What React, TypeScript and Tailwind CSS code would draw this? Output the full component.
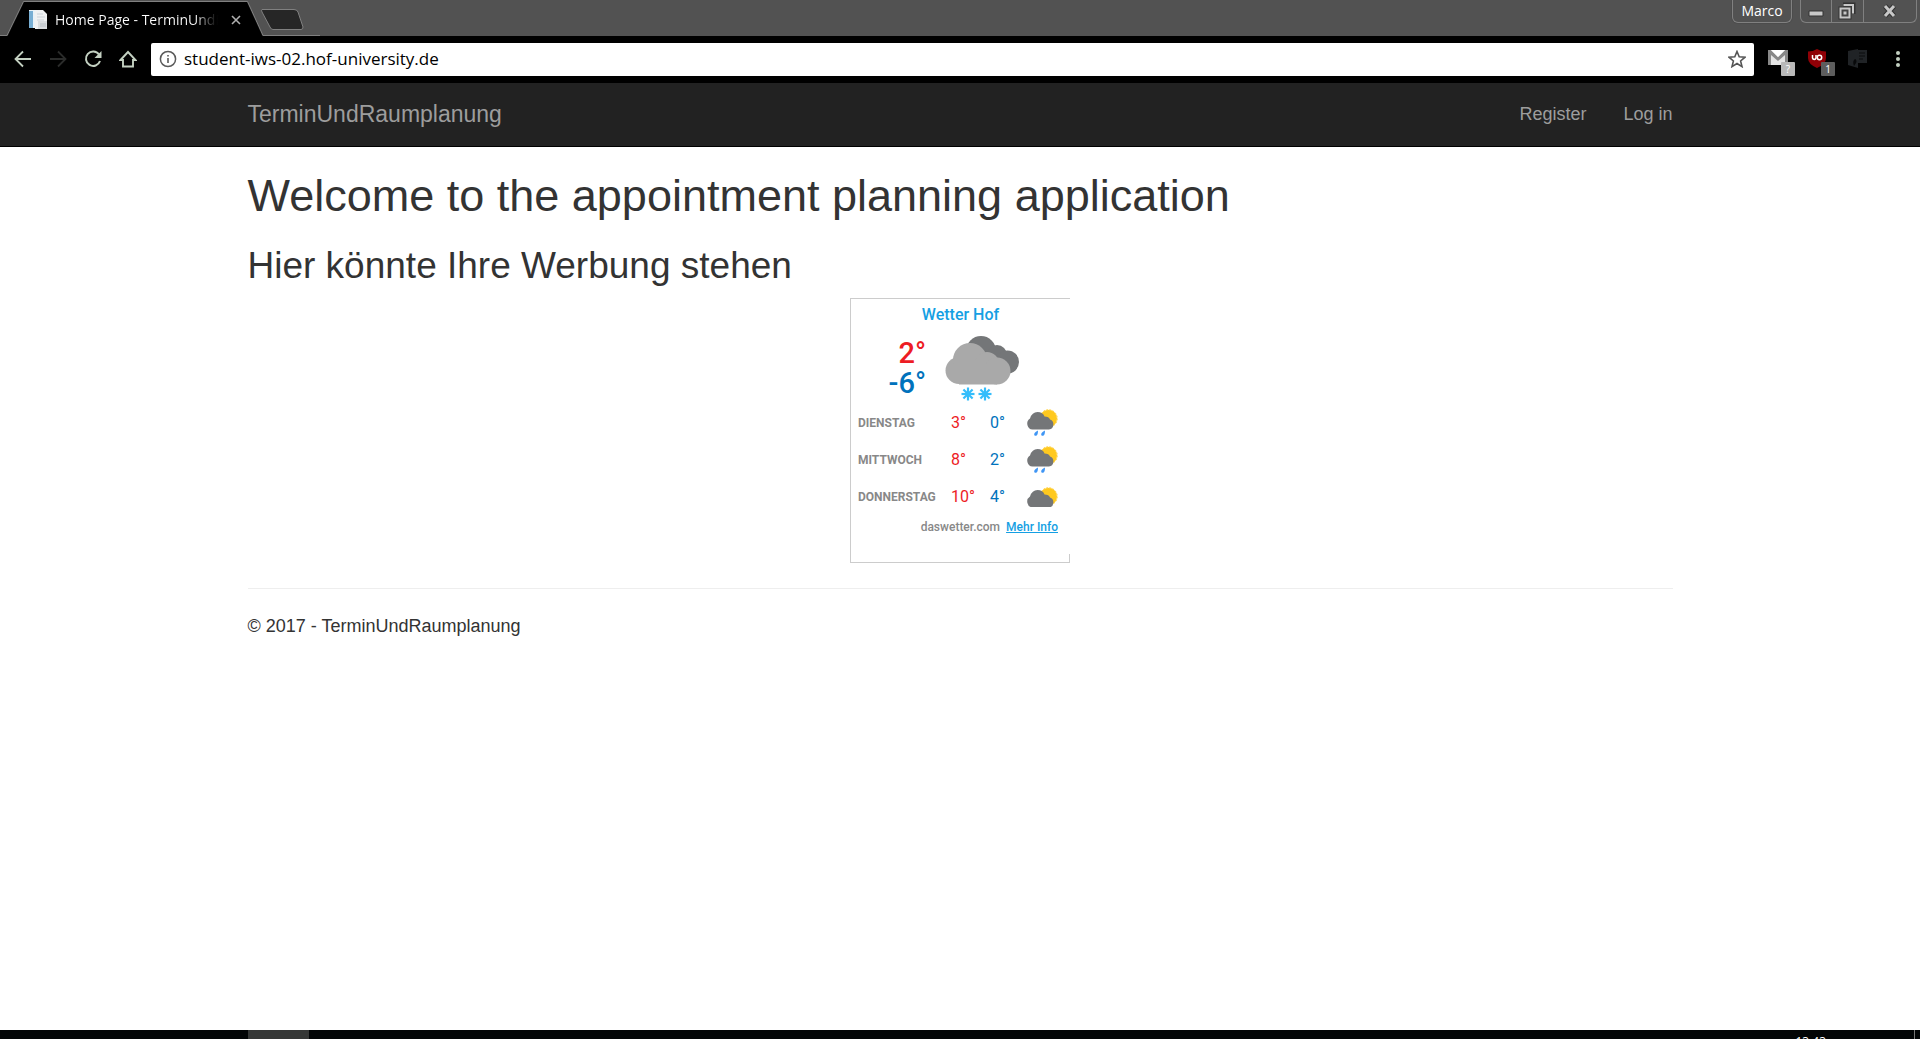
import React from "react";

const days = [
  { name: "DIENSTAG", max: "3°", min: "0°", rain: true },
  { name: "MITTWOCH", max: "8°", min: "2°", rain: true },
  { name: "DONNERSTAG", max: "10°", min: "4°", rain: false },
];

function TabStrip() {
  return (
    <header className="relative flex h-9 items-start justify-between bg-[#525252]">
      <svg className="absolute left-0 top-0 h-9 w-80" viewBox="0 0 320 36" aria-hidden="true">
        <path d="M0 35.5H7L23.500 1.500H247.500L263 35.500H320" fill="none" stroke="#808080" />
        <path d="M7.500 36L24 2H247L262.500 36Z" fill="#000" />
        <path d="M262 9.500H294Q297 9.500 298 12L303 27Q303 29.500 301 29.500H273Q271 29.500 270 27L262 12Q261 9.500 262 9.500Z" fill="#262626" stroke="#808080" />
      </svg>
      <div className="relative flex h-9 items-center pl-7 pt-1">
        <svg width="20" height="20" viewBox="0 0 20 20" aria-hidden="true">
          <path d="M1 0H14V18H1Z" fill="#e9f1f6" />
          <path d="M1 1H5V18H1Z" fill="#78aed3" />
          <path d="M7 0H15L19 4V19H7Z" fill="#f0f1f2" />
          <path d="M9 4H15M9 7H17M9 10H16" stroke="#cbd2d8" />
          <path d="M10 11H19V19H10Z" fill="#dadddf" />
          <path d="M12 14H18M12 16H18" stroke="#b8bec4" />
        </svg>
        <span className="ml-[7px] w-[165px] overflow-hidden whitespace-nowrap bg-linear-to-r from-white from-85% to-black bg-clip-text pb-px text-[14px] text-transparent">
          Home Page - TerminUndR
        </span>
        <button aria-label="Close tab" className="ml-[7px] p-1">
          <svg width="10" height="10" viewBox="0 0 10 10"><path d="M1 1L9 9M9 1L1 9" stroke="#b0b0b0" strokeWidth="1.600" /></svg>
        </button>
      </div>
      <div className="relative flex gap-2 pr-[3px] text-white">
        <button className="h-[23px] w-[60px] rounded-b-md border border-t-0 border-[#808080] text-[14px] leading-[22px] shadow-[0_0_1px_#222]">Marco</button>
        <div className="flex h-[23px] overflow-hidden rounded-b-md border border-t-0 border-[#808080]">
          <button aria-label="Minimize" className="w-[31px] border-r border-[#808080]">
            <svg width="30" height="22" viewBox="0 0 30 22"><path d="M8 11H22V16H8Z" fill="#c8c8c8" stroke="#333" /></svg>
          </button>
          <button aria-label="Restore" className="w-8 border-r border-[#808080]">
            <svg width="31" height="22" viewBox="0 0 31 22">
              <path d="M11 4.500H21.500V14" fill="none" stroke="#333" strokeWidth="4" />
              <path d="M11.500 5H21V13.500" fill="none" stroke="#c8c8c8" strokeWidth="2" />
              <path d="M8.500 8.500H17.500V17.500H8.500Z" fill="#444" stroke="#333" strokeWidth="4" />
              <path d="M8.500 8.500H17.500V17.500H8.500Z" fill="#444" stroke="#c8c8c8" strokeWidth="2" />
              <path d="M11.500 11.500H14.500V14.500H11.500Z" fill="#c8c8c8" />
            </svg>
          </button>
          <button aria-label="Close" className="w-[52px]">
            <svg width="52" height="22" viewBox="0 0 52 22">
              <path d="M21 6L30 16M30 6L21 16" stroke="#333" strokeWidth="5" />
              <path d="M21 6L30 16M30 6L21 16" stroke="#c8c8c8" strokeWidth="3" />
            </svg>
          </button>
        </div>
      </div>
    </header>
  );
}

function Toolbar() {
  return (
    <div className="flex h-[47px] items-center bg-black pb-px pl-[14px] pr-[19px]">
      <div className="flex w-[137px] items-center gap-[17px] text-[#c3d0c1]">
        <button aria-label="Back">
          <svg width="18" height="18" viewBox="0 0 18 18" fill="none" stroke="currentColor" strokeWidth="1.800"><path d="M17 9H2M9 1.500L1.500 9L9 16.500" /></svg>
        </button>
        <button aria-label="Forward" className="text-[#2b2c2b]">
          <svg width="18" height="18" viewBox="0 0 18 18" fill="none" stroke="currentColor" strokeWidth="1.800"><path d="M1 9H16M9 1.500L16.500 9L9 16.500" /></svg>
        </button>
        <button aria-label="Reload">
          <svg width="18" height="18" viewBox="0 0 18 18"><path d="M15 4.500A7.200 7.200 0 1 0 16 11" fill="none" stroke="currentColor" strokeWidth="2" /><path d="M17.500 1V8H10.500Z" fill="currentColor" /></svg>
        </button>
        <button aria-label="Home">
          <svg width="18" height="18" viewBox="0 0 18 18" fill="none" stroke="currentColor" strokeWidth="1.900"><path d="M1.500 10L9 2L16.500 10H14V16.500H4V10H1.500Z" /></svg>
        </button>
      </div>
      <div className="flex h-[33px] min-w-0 flex-1 items-center rounded-xs bg-white px-2">
        <svg className="shrink-0" width="18" height="18" viewBox="0 0 18 18" aria-hidden="true">
          <circle cx="9" cy="9" r="7.600" fill="none" stroke="#5a5a5a" strokeWidth="1.500" />
          <path d="M9 8V13M9 5V6.600" stroke="#5a5a5a" strokeWidth="1.600" />
        </svg>
        <input aria-label="Address" defaultValue="student-iws-02.hof-university.de" className="ml-[7px] min-w-0 flex-1 bg-transparent text-[17px] leading-6 text-black outline-none" />
        <button aria-label="Bookmark this page">
          <svg width="18" height="18" viewBox="0 0 18 18"><path d="M9 1.500L11.200 6.800L17 7.200L12.600 11L14 16.600L9 13.500L4 16.600L5.400 11L1 7.200L6.800 6.800Z" fill="none" stroke="#555" strokeWidth="1.600" /></svg>
        </button>
      </div>
      <div className="flex items-center pl-[13px]">
        <button aria-label="Gmail" className="w-10 pt-2">
          <svg width="30" height="28" viewBox="0 0 30 28">
            <path d="M1 1H21V16H1Z" fill="#e4e4e4" /><path d="M1 1H4L11 8L18 1H21V16H18V6L11 12L4 6V16H1Z" fill="#888" /><path d="M4 1H18L11 8Z" fill="#fff" />
            <rect x="14" y="13" width="14" height="14" rx="1" fill="#b9b9b9" />
            <text x="21" y="24" fontSize="10" textAnchor="middle" fill="#fff">?</text>
          </svg>
        </button>
        <button aria-label="uBlock Origin" className="w-10 pt-2">
          <svg width="30" height="28" viewBox="0 0 30 28">
            <path d="M10 0Q14 2.500 19 2.500V9Q19 15 10 19Q1 15 1 9V2.500Q6 2.500 10 0Z" fill="#900006" />
            <path d="M5.500 6V9A1.800 1.800 0 0 0 9 9V6" fill="none" stroke="#fff" strokeWidth="1.500" /><circle cx="12.500" cy="8.500" r="2.200" fill="none" stroke="#fff" strokeWidth="1.500" />
            <rect x="14" y="13" width="14" height="14" rx="1" fill="#5d5d5d" />
            <text x="21" y="24" fontSize="10" textAnchor="middle" fill="#fff">1</text>
          </svg>
        </button>
        <button aria-label="Extension" className="w-12 pt-2">
          <svg width="22" height="28" viewBox="0 0 22 28"><path d="M1 2L11 0V19L1 16ZM10 1H20V14H10Z" fill="#202326" /><path d="M12 4H18M12 7H18M12 10H16" stroke="#0b0c0d" /><path d="M8 10A2 2.500 0 0 1 9 14L7 17Q5 12 8 10Z" fill="#08090a" /></svg>
        </button>
        <button aria-label="Menu">
          <svg width="6" height="18" viewBox="0 0 6 18" fill="#c3d0c1"><circle cx="3" cy="3" r="2" /><circle cx="3" cy="9" r="2" /><circle cx="3" cy="15" r="2" /></svg>
        </button>
      </div>
    </div>
  );
}

const flakeArms = [0, 45, 90, 135];

function SnowCloud() {
  return (
    <svg className="mt-[7px]" width="76" height="68" viewBox="0 0 76 68" role="img" aria-label="Snow">
      <g fill="#747678">
        <circle cx="37" cy="17" r="15" />
        <circle cx="53" cy="21" r="10" />
        <circle cx="63.500" cy="28" r="11.500" />
        <path d="M40 20H62V39H40Z" />
      </g>
      <g fill="#a9a9a9">
        <circle cx="15" cy="36.500" r="13.500" />
        <circle cx="26" cy="26" r="17" />
        <circle cx="43" cy="30" r="12" />
        <circle cx="53" cy="37" r="13.500" />
        <path d="M15 30H53V50.500H15Z" />
      </g>
      {[24, 41].map((x) => (
        <g key={x} stroke="#35bdfb" strokeWidth="2.200">
          <circle cx={x} cy="60" r="2.500" fill="#35bdfb" stroke="none" />
          {flakeArms.map((a) => (
            <path key={a} d={`M${x} 53.500V66.500`} transform={`rotate(${a} ${x} 60)`} />
          ))}
        </g>
      ))}
    </svg>
  );
}

function DayIcon({ rain }: { rain: boolean }) {
  return (
    <svg width="32" height={rain ? 28 : 20} viewBox={rain ? "0 0 32 28" : "0 0 32 20"} role="img" aria-label={rain ? "Rain" : "Cloudy"}>
      <circle cx="22.500" cy="9.500" r="8.500" fill="#ffc91f" />
      <circle cx="22.500" cy="9.500" r="8.700" fill="none" stroke="#ffc91f" strokeDasharray="2 1.200" />
      <path
        d="M6.500 20.500A6 6 0 0 1 4 9.500Q6 3 11.500 3Q17 3 18.500 7.500Q23 7.500 24 10.500A5.200 5.200 0 0 1 23 20.500Z"
        fill="#747678"
      />
      {rain && <path d="M12 21.500Q7 24 8.500 26.500Q12 28 12 21.500ZM19 21.500Q14 24 15.500 26.500Q19 28 19 21.500Z" fill="#3f96f5" />}
    </svg>
  );
}

function Weather() {
  return (
    <section className="mx-auto h-[265px] w-[220px] border border-[#ccc] font-['Roboto',sans-serif]">
      <div className="-mr-px h-[255px] bg-white pt-1">
        <h3 className="text-center text-[16px] font-medium leading-6 text-[#159fe3]">Wetter Hof</h3>
        <div className="flex h-[77px] justify-start">
          <div className="w-[75px] pt-[11px] text-right text-[29px] font-medium leading-[30px]">
            <p className="text-[#ed1c24]">2°</p>
            <p className="text-[#0072bc]">-6°</p>
          </div>
          <div className="ml-[18px]"><SnowCloud /></div>
        </div>
        <table className="w-full table-fixed text-[16px]">
          <tbody>
            {days.map((d) => (
              <tr key={d.name} className="h-[37px]">
                <th scope="row" className="w-[100px] pl-[7px] text-left text-[12px] font-bold text-[#888]">{d.name}</th>
                <td className="w-[39px] text-[#ed1c24]">{d.max}</td>
                <td className="w-9 text-[#0072bc]">{d.min}</td>
                <td><DayIcon rain={d.rain} /></td>
              </tr>
            ))}
          </tbody>
        </table>
        <p className="pr-3 text-right text-[12px] font-medium leading-6 text-[#888]">
          daswetter.com <a href="#info" className="ml-[3px] text-[#159fe3] underline">Mehr Info</a>
        </p>
      </div>
    </section>
  );
}

export default function App() {
  return (
    <div className="flex min-h-screen flex-col bg-white font-['Open_Sans','Noto_Sans',sans-serif]">
      <TabStrip />
      <Toolbar />
      <div className="flex flex-1 flex-col font-['Liberation_Sans',Arial,sans-serif] text-[#333]">
        <nav className="border-b border-black bg-[#222]">
          <div className="mx-auto flex h-[63px] max-w-[1463px] items-center justify-between px-[19px] text-[#9d9d9d]">
            <a href="#home" className="text-[23px]">TerminUndRaumplanung</a>
            <div className="flex gap-[37px] text-[18px]">
              <a href="#register">Register</a>
              <a href="#login">Log in</a>
            </div>
          </div>
        </nav>
        <main className="mx-auto w-full max-w-[1463px] px-[19px]">
          <h1 className="mt-6 text-[45px] leading-[50px]">Welcome to the appointment planning application</h1>
          <h2 className="mb-3 mt-6 text-[37px] leading-[41px]">Hier könnte Ihre Werbung stehen</h2>
          <Weather />
          <hr className="my-[25px] border-[#eee]" />
          <footer className="text-[18px] leading-[25px]">© 2017 - TerminUndRaumplanung</footer>
        </main>
      </div>
      <div className="flex h-[9px] overflow-hidden bg-[#020506]">
        <div className="ml-[248px] w-[61px] bg-[#353736]" />
        <time className="ml-auto mr-[88px] pt-1 text-[12px] leading-4 text-white">13:43</time>
        <div className="mr-[5px] w-px bg-[#777]" />
      </div>
    </div>
  );
}
